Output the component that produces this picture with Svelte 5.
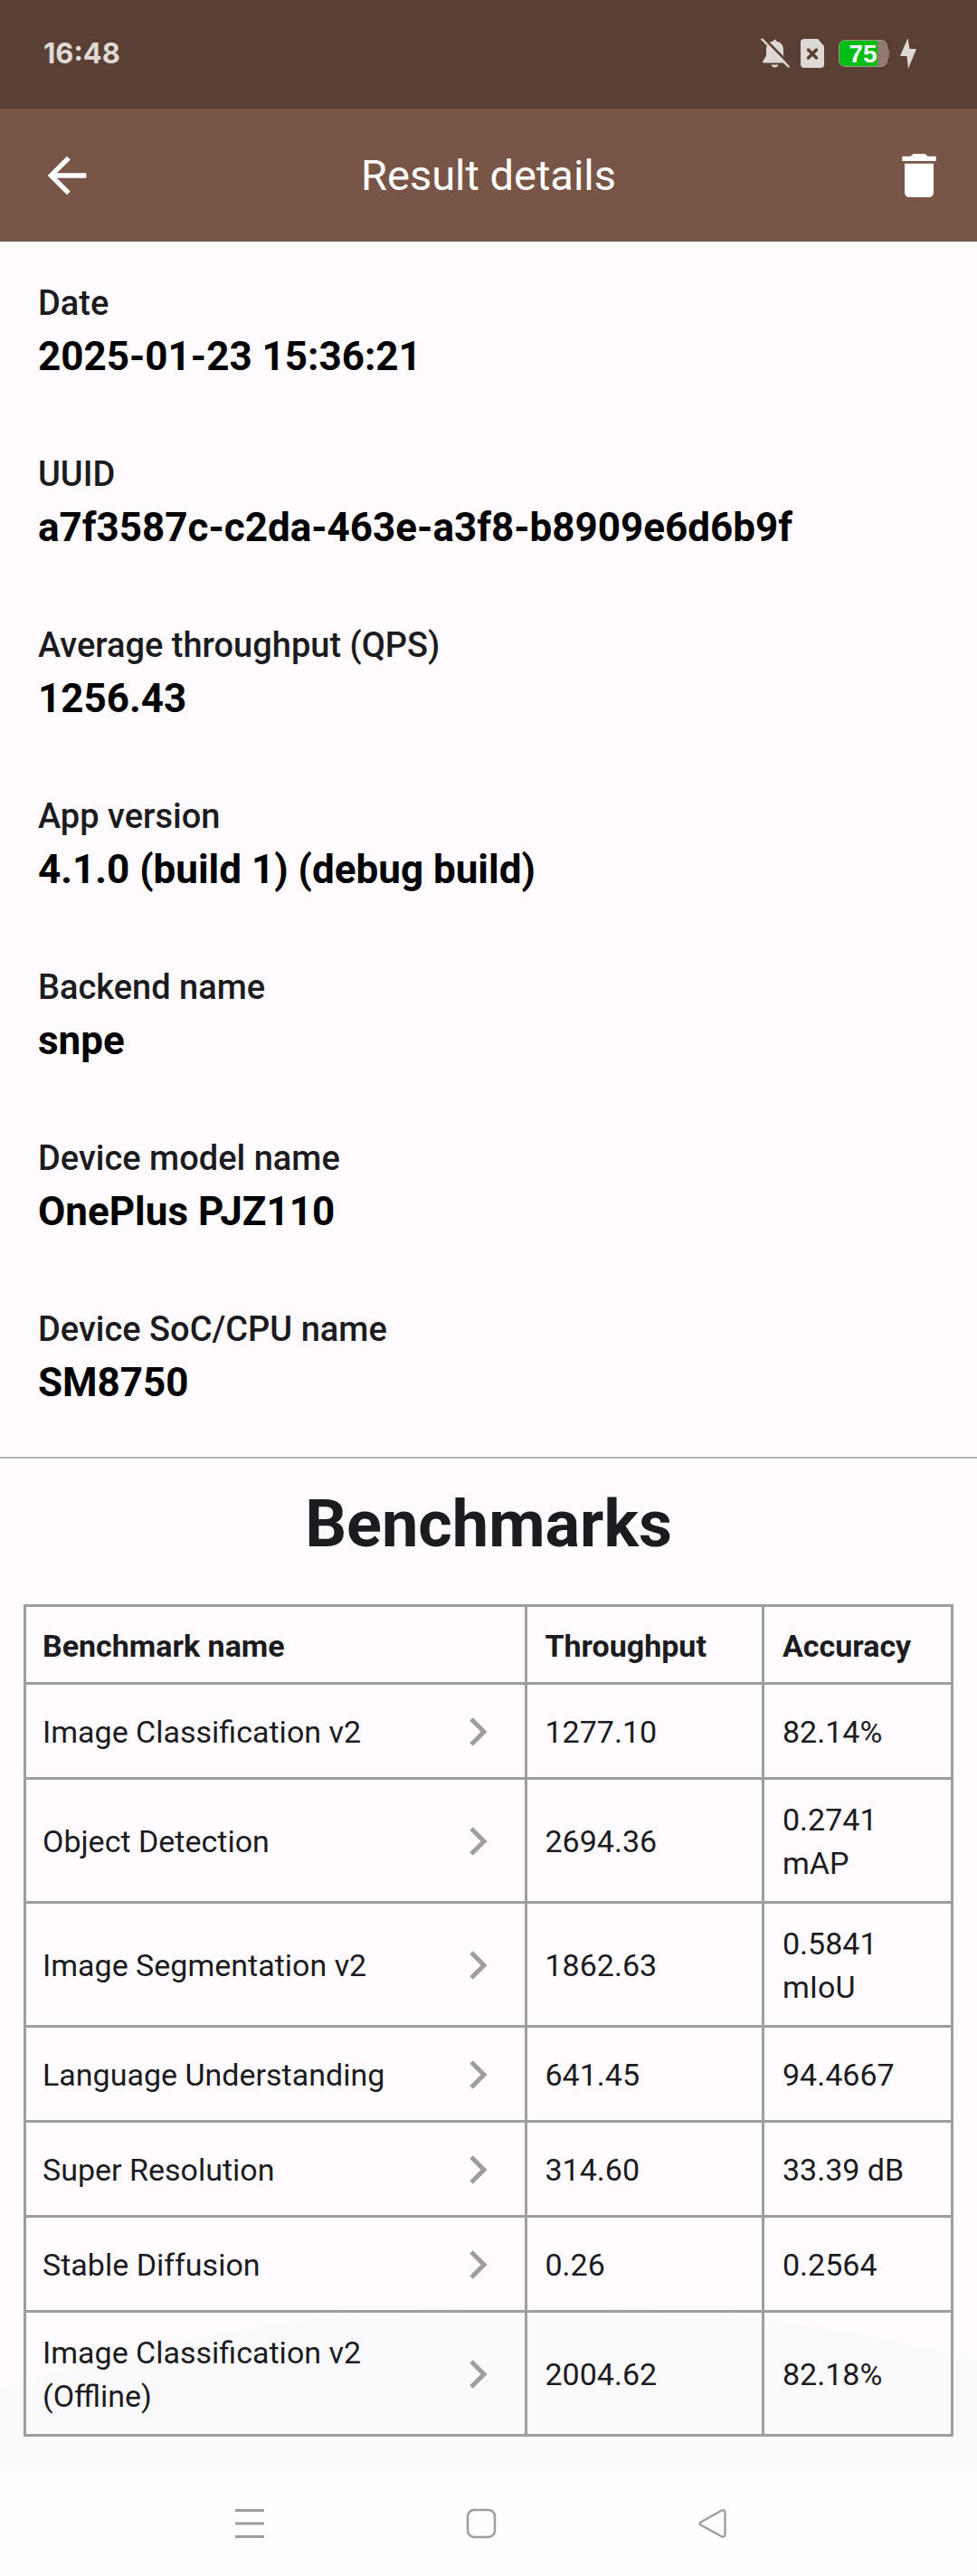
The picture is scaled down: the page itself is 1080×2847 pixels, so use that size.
<script>
  const details = [
    ['Date', '2025-01-23 15:36:21'],
    ['UUID', 'a7f3587c-c2da-463e-a3f8-b8909e6d6b9f'],
    ['Average throughput (QPS)', '1256.43'],
    ['App version', '4.1.0 (build 1) (debug build)'],
    ['Backend name', 'snpe'],
    ['Device model name', 'OnePlus PJZ110'],
    ['Device SoC/CPU name', 'SM8750'],
  ];
  const benchmarks = [
    ['Image Classification v2', '1277.10', '82.14%'],
    ['Object Detection', '2694.36', '0.2741 mAP'],
    ['Image Segmentation v2', '1862.63', '0.5841 mIoU'],
    ['Language Understanding', '641.45', '94.4667'],
    ['Super Resolution', '314.60', '33.39 dB'],
    ['Stable Diffusion', '0.26', '0.2564'],
    ['Image Classification v2 (Offline)', '2004.62', '82.18%'],
  ];
</script>

<div class="screen">
  <div class="status">
    <time>16:48</time>
    <div class="indicators">
      <svg class="bell" width="32" height="34" viewBox="0 0 32 34" aria-hidden="true">
        <path fill="currentColor" d="M14 3.5C14 .8 17 .8 17 3.500C22 4.200 25 8 25 13v5c0 3.500 4 6 4 9.500H2C2 24 6 22 6 18v-5c0-5 3-9 8-9.500zM11.500 29.500h8c-.6 2-2 3-4 3s-3.400-1-4-3z" />
        <path d="M2.500-.5L33 30" stroke="#5a3f34" stroke-width="3" />
        <path d="M1.500 1.500L30.500 31.500" stroke="currentColor" stroke-width="2.500" stroke-linecap="round" />
      </svg>
      <svg class="sim" width="26" height="32" viewBox="0 0 26 32" aria-hidden="true">
        <path fill="currentColor" d="M4 0h15l7 8v20a4 4 0 0 1-4 4H4a4 4 0 0 1-4-4V4a4 4 0 0 1 4-4z" />
        <path d="M8.500 12l9 9m0-9l-9 9" stroke="#5a3f34" stroke-width="3.500" stroke-linecap="round" />
      </svg>
      <div class="battery"><span>75</span></div>
      <svg class="bolt" width="18" height="34" viewBox="0 0 18 34" aria-hidden="true">
        <path fill="currentColor" d="M8.500 0L0 20h7.500L9 34l9-22h-7.500z" />
      </svg>
    </div>
  </div>

  <header>
    <button class="back" aria-label="Back">
      <svg width="64" height="64" viewBox="0 0 24 24" aria-hidden="true">
        <path fill="currentColor" d="M20 11H7.830l5.590-5.590L12 4l-8 8 8 8 1.410-1.410L7.830 13H20v-2z" />
      </svg>
    </button>
    <h1>Result details</h1>
    <button class="delete" aria-label="Delete">
      <svg width="64" height="64" viewBox="0 0 24 24" aria-hidden="true">
        <path fill="currentColor" d="M6 19c0 1.100.9 2 2 2h8c1.100 0 2-.9 2-2V7H6v12zM19 4h-3.500l-1-1h-5l-1 1H5v2h14V4z" />
      </svg>
    </button>
  </header>

  <main>
    <dl>
      {#each details as [label, value]}
        <div>
          <dt>{label}</dt>
          <dd>{value}</dd>
        </div>
      {/each}
    </dl>
    <section>
      <h2>Benchmarks</h2>
      <table>
        <thead>
          <tr><th class="name" scope="col">Benchmark name</th><th scope="col">Throughput</th><th class="accuracy" scope="col">Accuracy</th></tr>
        </thead>
        <tbody>
          {#each benchmarks as [name, throughput, accuracy]}
            <tr>
              <td>
                <a href="#benchmark">
                  <span>{name}</span>
                  <svg width="22" height="34" viewBox="0 0 22 34" aria-hidden="true">
                    <path d="M3 3l14 14L3 31" fill="none" stroke="currentColor" stroke-width="5" />
                  </svg>
                </a>
              </td>
              <td>{throughput}</td>
              <td>{accuracy}</td>
            </tr>
          {/each}
        </tbody>
      </table>
    </section>
  </main>

  <nav aria-label="System">
    <button aria-label="Recent apps">
      <svg width="34" height="34" viewBox="0 0 34 34" aria-hidden="true">
        <path d="M1 2.500h32M1 17h32M1 31.500h32" stroke="currentColor" stroke-width="3" />
      </svg>
    </button>
    <button aria-label="Home">
      <svg width="34" height="34" viewBox="0 0 34 34" aria-hidden="true">
        <rect x="2" y="2" width="30" height="30" rx="7" fill="none" stroke="currentColor" stroke-width="2.500" />
      </svg>
    </button>
    <button aria-label="Back">
      <svg width="34" height="34" viewBox="0 0 34 34" aria-hidden="true">
        <path d="M3.500 15.500L27 2.500c1.500-.8 3.500 0 3.500 2v25c0 2-2 2.800-3.500 2L3.500 18.500c-1.500-.9-1.500-2.100 0-3z" fill="none" stroke="currentColor" stroke-width="2.400" />
      </svg>
    </button>
  </nav>
</div>

<style>
  :global(body) {
    margin: 0;
    background: #fefefe;
  }
  .screen {
    display: flex;
    flex-direction: column;
    min-height: 100vh;
    font-family: Roboto, 'Liberation Sans', sans-serif;
    color: #1c1b1f;
  }
  button {
    display: flex;
    padding: 0;
    border: 0;
    background: none;
    color: inherit;
  }
  svg {
    display: block;
    flex: none;
  }
  .status {
    display: flex;
    justify-content: space-between;
    align-items: center;
    box-sizing: border-box;
    height: 120px;
    padding: 0 67px 2px 48px;
    background: #5a3f34;
    color: #dfd9d6;
  }
  time {
    font: 700 31px/40px Inter, Roboto, sans-serif;
  }
  .indicators {
    display: flex;
    align-items: center;
  }
  .sim {
    margin-left: 12px;
  }
  .battery {
    position: relative;
    box-sizing: border-box;
    width: 54px;
    height: 30px;
    margin-left: 16px;
    border: 1px solid #a39690;
    border-radius: 7px;
    background: linear-gradient(90deg, #00bd13 80%, #8e7a72 80%);
    color: #fff;
    font: 700 28px/30px 'Liberation Sans', sans-serif;
    text-align: center;
  }
  .battery::after {
    content: '';
    position: absolute;
    top: 9px;
    right: -3px;
    width: 3px;
    height: 11px;
    border-radius: 0 3px 3px 0;
    background: #8e7a72;
  }
  .bolt {
    margin-left: 14px;
  }
  header {
    display: grid;
    grid-template-columns: 1fr auto 1fr;
    align-items: center;
    height: 147px;
    padding: 0 32px;
    background: #795548;
    color: #fff;
  }
  .back {
    justify-self: start;
    margin-left: 10px;
  }
  .delete {
    justify-self: end;
  }
  h1 {
    margin: 0;
    font-size: 47px;
    line-height: 56px;
    font-weight: 400;
  }
  main {
    flex: 1;
    padding-bottom: 38px;
    background: radial-gradient(circle 1920px at 55% calc(100% + 1736px), #faf9fb 1920px, #fffbff 1920px);
  }
  dl {
    display: flex;
    flex-direction: column;
    gap: 72px;
    margin: 0;
    padding: 39px 42px 53px;
    border-bottom: 2px solid #b8b5b9;
  }
  dt {
    font-size: 38px;
    line-height: 59px;
    font-weight: 500;
  }
  dd {
    margin: 0;
    font-size: 44px;
    line-height: 58px;
    font-weight: 700;
    color: #000;
  }
  h2 {
    margin: 0;
    padding: 31px 0 46px;
    font-size: 72px;
    line-height: 84px;
    font-weight: 700;
    text-align: center;
  }
  section {
    padding: 0 26px;
  }
  table {
    width: 100%;
    border-collapse: collapse;
    table-layout: fixed;
    font-size: 34px;
    line-height: 48px;
  }
  th,
  td {
    height: 105px;
    box-sizing: border-box;
    padding: 20px 20px 18px;
    border: 3px solid #9e9e9e;
    text-align: left;
  }
  th {
    height: 86px;
    padding: 18px 20px 16px;
  }
  th:first-child,
  td:first-child {
    padding-left: 18px;
  }
  .name {
    width: 54%;
  }
  .accuracy {
    width: 209px;
  }
  a {
    display: flex;
    justify-content: space-between;
    align-items: center;
    padding-right: 20px;
    color: inherit;
    text-decoration: none;
  }
  a span {
    max-width: 400px;
  }
  a svg {
    color: #9e9e9e;
  }
  nav {
    display: flex;
    justify-content: space-between;
    align-items: center;
    height: 116px;
    padding: 0 25.5% 0 24%;
    color: #9e9e9e;
  }
</style>
